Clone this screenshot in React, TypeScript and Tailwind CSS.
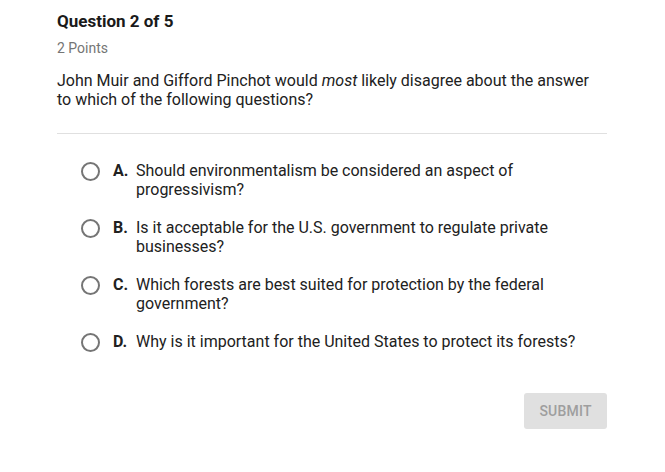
const options = [
  { letter: "A.", text: "Should environmentalism be considered an aspect of progressivism?" },
  { letter: "B.", text: "Is it acceptable for the U.S. government to regulate private businesses?" },
  { letter: "C.", text: "Which forests are best suited for protection by the federal government?" },
  { letter: "D.", text: "Why is it important for the United States to protect its forests?" },
]

export default function App() {
  return (
    <div className="w-[665px] h-[472px] bg-white font-['Roboto',sans-serif] text-[#212121]">
      <div className="pl-[57px] pr-[58px] pt-[10px]">
        <h1 className="text-[17px] font-bold leading-[22px] text-[#1a1a1a]">Question 2 of 5</h1>
        <p className="mt-[8px] text-[14px] leading-[17px] text-[#757575]">2 Points</p>
        <p className="mt-[14px] text-[16px] leading-[19px] text-[#212121] pr-[10px]">
          John Muir and Gifford Pinchot would <em>most</em> likely disagree about the answer to which of the following questions?
        </p>
        <div className="mt-[24px] h-px bg-[#e0e0e0]" />
        <div className="mt-[27px] flex flex-col gap-[19px] pl-[24px]">
          {options.map(o => (
            <div key={o.letter} className="flex items-start">
              <span className="mt-[1px] w-[19px] h-[19px] shrink-0 rounded-full border-2 border-[#757575]" />
              <span className="ml-[13px] w-[23px] shrink-0 text-[16px] leading-[19px] font-bold">{o.letter}</span>
              <span className="w-[450px] text-[16px] leading-[19px]">{o.text}</span>
            </div>
          ))}
        </div>
        <div className="mt-[41px] flex justify-end">
          <button className="w-[83px] h-[36px] rounded-[3px] bg-[#e0e0e0] text-[14px] font-medium text-[#9e9e9e] tracking-[0.2px]">
            SUBMIT
          </button>
        </div>
      </div>
    </div>
  )
}
